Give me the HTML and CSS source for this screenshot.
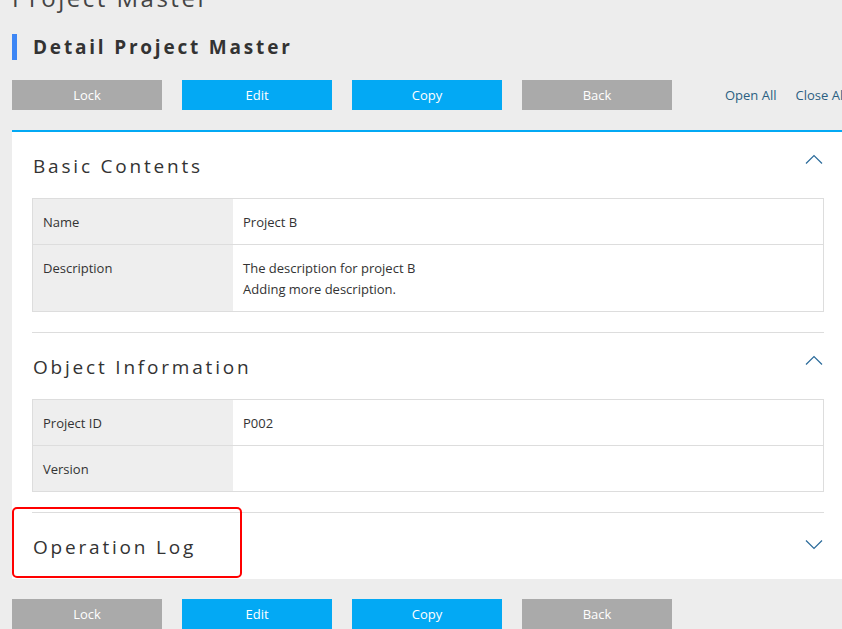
FILE: index.html
```html
<!DOCTYPE html>
<html lang="en">
<head>
<meta charset="utf-8">
<title>Detail Project Master</title>
<link rel="stylesheet" href="styles.css">
</head>
<body>
<div class="page">
  <h1 class="page-title">Project Master</h1>
  <h2 class="sub-title">Detail Project Master</h2>

  <div class="toolbar">
    <button class="btn btn-grey">Lock</button>
    <button class="btn btn-blue">Edit</button>
    <button class="btn btn-blue">Copy</button>
    <button class="btn btn-grey">Back</button>
    <div class="links">
      <a class="link">Open All</a>
      <a class="link">Close All</a>
    </div>
  </div>

  <div class="panel">
    <section class="section">
      <div class="section-head">
        <h3 class="section-title">Basic Contents</h3>
        <svg class="chev chev-up" width="18" height="10" viewBox="0 0 18 10"><polyline points="1,9.5 9,1.5 17,9.5" fill="none" stroke="#2a6a9a" stroke-width="1.2"/></svg>
      </div>
      <table class="info">
        <tr><th>Name</th><td>Project B</td></tr>
        <tr><th>Description</th><td>The description for project B<br>Adding more description.</td></tr>
      </table>
    </section>

    <section class="section">
      <div class="section-head">
        <h3 class="section-title">Object Information</h3>
        <svg class="chev chev-up" width="18" height="10" viewBox="0 0 18 10"><polyline points="1,9.5 9,1.5 17,9.5" fill="none" stroke="#2a6a9a" stroke-width="1.2"/></svg>
      </div>
      <table class="info">
        <tr><th>Project ID</th><td>P002</td></tr>
        <tr><th>Version</th><td></td></tr>
      </table>
    </section>

    <section class="section section-last">
      <div class="highlight"></div>
      <div class="section-head">
        <h3 class="section-title">Operation Log</h3>
        <svg class="chev chev-down" width="18" height="10" viewBox="0 0 18 10"><polyline points="1,0.5 9,8.5 17,0.5" fill="none" stroke="#2a6a9a" stroke-width="1.2"/></svg>
      </div>
    </section>
  </div>

  <div class="toolbar toolbar-bottom">
    <button class="btn btn-grey">Lock</button>
    <button class="btn btn-blue">Edit</button>
    <button class="btn btn-blue">Copy</button>
    <button class="btn btn-grey">Back</button>
  </div>
</div>
</body>
</html>
```

FILE: styles.css
```css
html, body {
  margin: 0;
  padding: 0;
  overflow: hidden;
  background: #ededed;
}
body {
  font-family: "Open Sans", "Noto Sans", sans-serif;
  color: #333;
  font-size: 13px;
}
.page {
  width: 832px;
  padding: 0 0 0 12px;
}
.page-title {
  margin: -17px 0 0 0;
  font-size: 24px;
  line-height: 30px;
  font-weight: 400;
  letter-spacing: 2.5px;
  color: #444;
}
.sub-title {
  margin: 21px 0 0 0;
  border-left: 5px solid #3d86f5;
  padding-left: 16px;
  height: 26px;
  font-size: 19px;
  line-height: 26px;
  font-weight: 700;
  letter-spacing: 2.8px;
  color: #333;
}
.toolbar {
  display: flex;
  align-items: center;
  gap: 20px;
  margin-top: 20px;
  height: 30px;
  white-space: nowrap;
}
.btn {
  width: 150px;
  height: 30px;
  border: 0;
  padding: 0;
  font-family: inherit;
  font-size: 13px;
  color: #fff;
  flex: none;
}
.btn-grey { background: #aaaaaa; }
.btn-blue { background: #03a9f4; }
.links {
  display: flex;
  gap: 19px;
  margin-left: 33px;
}
.link {
  color: #2b5f82;
  font-size: 13px;
}
.panel {
  margin-top: 20px;
  border-top: 2px solid #03a9f4;
  background: #fff;
  padding: 0 20px 0 20px;
}
.section {
  position: relative;
  padding-bottom: 20px;
}
.section + .section {
  border-top: 1px solid #dddddd;
}
.section-last {
  padding-bottom: 0;
}
.section-head {
  display: flex;
  justify-content: space-between;
  height: 66px;
}
.section-title {
  margin: 0;
  font-size: 19px;
  line-height: 64px;
  padding-top: 2px;
  font-weight: 400;
  letter-spacing: 2.8px;
  color: #333;
  padding-left: 1px;
}
.chev {
  flex: none;
  margin-right: 1px;
}
.chev-up { margin-top: 22px; }
.chev-down { margin-top: 27px; }
.info {
  width: 100%;
  border-collapse: collapse;
  border: 1px solid #dddddd;
}
.info th, .info td {
  border-bottom: 1px solid #dddddd;
  padding: 13px 10px 11px 10px;
  line-height: 21px;
  height: 21px;
  text-align: left;
  vertical-align: top;
  font-weight: 400;
  font-size: 13px;
}
.info th {
  width: 180px;
  background: #eeeeee;
}
.highlight {
  position: absolute;
  left: -20px;
  top: -6px;
  width: 226px;
  height: 67px;
  border: 2px solid #ff0000;
  border-radius: 5px;
}
```
